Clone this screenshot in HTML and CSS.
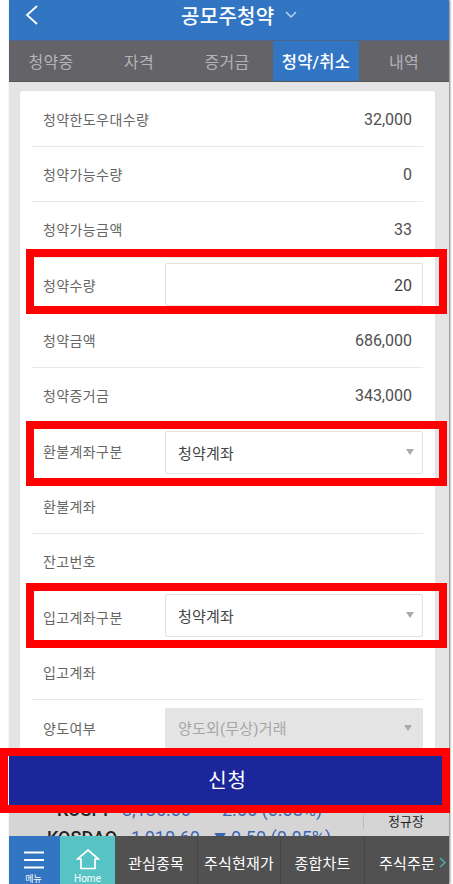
FILE: index.html
```html
<!DOCTYPE html>
<html lang="ko">
<head>
  <meta charset="UTF-8" />
  <meta name="viewport" content="width=device-width, initial-scale=1.0"/>
  <title>공모주청약</title>
  <link rel="stylesheet" href="styles.css">
</head>
<body>
  <div class="app">
    <header class="header">
      <svg class="back" width="14" height="20" viewBox="0 0 14 20"><path d="M12 1 L2 10 L12 19"/></svg>
      <h1>공모주청약</h1>
      <svg class="arrow" width="12" height="8" viewBox="0 0 12 8"><path d="M1 1 L6 6 L11 1"/></svg>
    </header>
    <nav class="tabs">
      <a>청약중</a>
      <a>자격</a>
      <a>증거금</a>
      <a class="active">청약/취소</a>
      <a>내역</a>
    </nav>
    <main class="content">
      <div class="card">
        <div class="row"><label>청약한도우대수량</label><span class="value">32,000</span></div>
        <div class="row"><label>청약가능수량</label><span class="value">0</span></div>
        <div class="row"><label>청약가능금액</label><span class="value">33</span></div>
        <div class="row marked"><label>청약수량</label><div class="field number">20</div></div>
        <div class="row"><label>청약금액</label><span class="value">686,000</span></div>
        <div class="row"><label>청약증거금</label><span class="value">343,000</span></div>
        <div class="row marked"><label>환불계좌구분</label><div class="field select lowered">청약계좌</div></div>
        <div class="row"><label>환불계좌</label></div>
        <div class="row"><label>잔고번호</label></div>
        <div class="row marked"><label>입고계좌구분</label><div class="field select raised">청약계좌</div></div>
        <div class="row"><label>입고계좌</label></div>
        <div class="row"><label>양도여부</label><div class="field select disabled">양도외(무상)거래</div></div>
      </div>
    </main>
    <div class="submit">신청</div>
    <div class="ticker">
      <div class="quotes">
        <div class="quote kospi"><b>KOSPI</b><span class="price">3,136.00</span><i>-</i><span>2.66 (0.08%)</span></div>
        <div class="quote kosdaq"><b>KOSDAQ</b><span class="price">1,010.60</span><i>▼</i><span>0.50 (0.05%)</span></div>
      </div>
      <div class="market">정규장</div>
    </div>
    <footer class="bottom-bar">
      <a class="menu">
        <svg width="20" height="18" viewBox="0 0 20 18"><path d="M0 1.500H20M0 9H20M0 16.500H20"/></svg>
        <span>메뉴</span>
      </a>
      <a class="home">
        <svg width="24" height="21" viewBox="0 0 24 21"><path d="M5 10H1.500L12 1L22.500 10H19V19.500H5Z"/></svg>
        <span>Home</span>
      </a>
      <a class="link">관심종목</a>
      <a class="link">주식현재가</a>
      <a class="link">종합차트</a>
      <a class="link last">주식주문<svg width="7" height="11" viewBox="0 0 7 11"><path d="M1 1L6 5.500L1 10"/></svg></a>
    </footer>
  </div>
</body>
</html>
```
FILE: styles.css
```css
*,
*::after {
  box-sizing: border-box;
}
body {
  margin: 0;
  background: #fff;
  font-family: Roboto, "Noto Sans CJK KR", sans-serif;
  overflow: hidden;
}
svg {
  fill: none;
  stroke: #fff;
}
.app {
  width: 440px;
  height: 884px;
  margin-left: 9px;
  display: flex;
  flex-direction: column;
  background: #e4e4e4;
  box-shadow: 1px 0 2px #777;
}
.header {
  height: 40px;
  flex: none;
  display: flex;
  align-items: center;
  padding: 0 0 10px 16px;
  background: #3275c3;
  color: #fff;
}
.header h1 {
  margin: 3px 10px 0 142px;
  font-size: 20px;
  line-height: 30px;
  font-weight: 500;
  letter-spacing: 0.3px;
  white-space: nowrap;
}
.back {
  stroke-width: 1.8;
}
.arrow {
  stroke: #b9d4f0;
  stroke-width: 1.5;
}
.tabs {
  height: 42px;
  flex: none;
  display: grid;
  grid-template-columns: 88px 88px 88px 86px 90px;
  background: #646368;
  border-top: 1px solid #4c6588;
  border-bottom: 1px solid #555;
}
.tabs a {
  display: flex;
  align-items: center;
  justify-content: center;
  padding-right: 4px;
  font-size: 16px;
  letter-spacing: 0.3px;
  color: #b4b4b6;
}
.tabs .active {
  background: #3275c3;
  color: #fff;
  font-size: 16.5px;
  font-weight: 500;
  padding-right: 0;
}
.tabs a:last-child {
  padding-right: 0;
}
.content {
  height: 674px;
  flex: none;
  padding: 9px 14px 0 11px;
}
.card {
  height: 665px;
  padding: 0 12px;
  background: #fff;
  border-radius: 2px;
  box-shadow: 0 0 1px #ccc;
}
.row {
  position: relative;
  height: 55.3px;
  display: flex;
  align-items: center;
  justify-content: space-between;
  padding: 0 11px;
  border-bottom: 1px solid #e8e8e8;
}
.row:first-child {
  height: 56px;
}
.row:last-child {
  border-bottom: 0;
}
.row label {
  font-size: 14px;
  letter-spacing: 0.4px;
  color: #666;
  white-space: nowrap;
}
.value {
  padding-top: 1px;
  font-size: 16px;
  color: #505050;
}
.field {
  width: 258px;
  height: 43px;
  flex: none;
  margin-right: -11px;
  padding: 0 8px 0 12px;
  display: flex;
  align-items: center;
  justify-content: space-between;
  border: 1px solid #e2e2e2;
  border-radius: 2px;
  font-size: 15px;
  letter-spacing: 0.2px;
  color: #444;
  background: #fff;
}
.field.number {
  justify-content: flex-end;
  padding: 2px 10px 0;
  font-size: 16px;
  letter-spacing: 0;
}
.select::after {
  content: "";
  border: 4px solid transparent;
  border-top: 6px solid #aaa;
  border-bottom: 0;
}
.lowered {
  margin-top: 3px;
}
.raised {
  margin-bottom: 3px;
}
.disabled {
  height: 40px;
  padding-right: 10px;
  background: #e4e4e4;
  color: #a6a6a6;
}
/* red highlight frames */
.marked::after,
.submit::after {
  content: "";
  position: absolute;
  border: 8px solid #f00;
  z-index: 2;
}
.marked::after {
  left: -6px;
  right: -24px;
  top: -9px;
  height: 65px;
}
.marked:nth-child(7)::after {
  top: -2px;
}
.marked:nth-child(10)::after {
  top: -6px;
}
.submit {
  position: relative;
  height: 49px;
  flex: none;
  display: flex;
  align-items: center;
  justify-content: center;
  padding: 0 3px 2px 0;
  background: #1a2699;
  color: #fff;
  font-size: 20px;
  letter-spacing: 0.8px;
}
.submit::after {
  left: -9px;
  right: -1px;
  top: -8px;
  bottom: -8px;
}
.ticker {
  height: 31px;
  flex: none;
  display: flex;
  overflow: hidden;
  background: #d5d5d5;
}
.quotes {
  width: 354px;
  flex: none;
}
.quote {
  display: flex;
  height: 26px;
  line-height: 26px;
  font-size: 18px;
  color: #3c64b4;
  white-space: nowrap;
}
.quote b {
  width: 84px;
  font-weight: 500;
  color: #222;
}
.quote .price {
  width: 83px;
}
.quote i {
  width: 17px;
  font-style: normal;
  font-size: 12px;
}
.kospi {
  margin-top: -8px;
  padding-left: 48px;
}
.kospi b {
  width: 65px;
}
.kosdaq {
  margin-top: 2px;
  padding-left: 38px;
}
.market {
  width: 86px;
  height: 14px;
  margin-top: 10px;
  padding-left: 24px;
  border-left: 1px solid #bbb;
  font-size: 13px;
  line-height: 14px;
  color: #222;
}
.bottom-bar {
  position: relative;
  height: 48px;
  flex: none;
  display: grid;
  grid-template-columns: 51px 55px 83px 83px 84px 84px;
  background: #515151;
  color: #fff;
}
.menu,
.home {
  display: flex;
  flex-direction: column;
  align-items: center;
  font-size: 9px;
  line-height: 10px;
}
.menu {
  background: #3275c3;
  padding-top: 15px;
  padding-right: 2px;
  gap: 5px;
}
.menu svg {
  stroke-width: 1.8;
}
.home {
  background: #57c3c5;
  padding-top: 13px;
  gap: 4px;
  font-size: 10px;
}
.home svg {
  stroke-width: 1.7;
}
.link {
  display: flex;
  align-items: center;
  justify-content: center;
  padding-top: 5px;
  font-size: 15px;
  letter-spacing: 0.2px;
  border-right: 1px solid #474747;
  white-space: nowrap;
}
.last {
  gap: 4px;
  padding-left: 11px;
  border-right: 0;
}
.last svg {
  stroke: #45b5b0;
  stroke-width: 1.5;
}
```
